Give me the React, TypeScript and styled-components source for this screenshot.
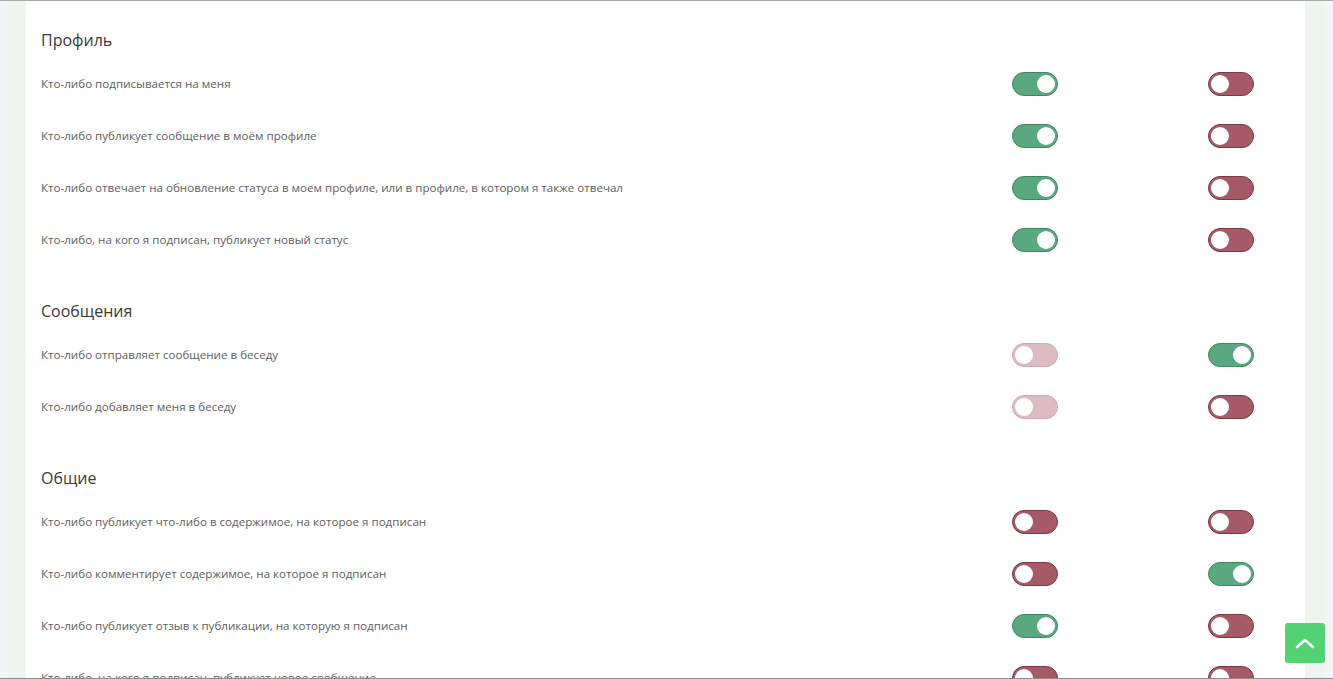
import React from 'react';
import styled, {createGlobalStyle} from "styled-components";

type Toggle = 'on' | 'off' | 'disabled'

type Row = {
    label: string
    site: Toggle
    email: Toggle
}

type Section = {
    title: string
    rows: Row[]
}

const sections: Section[] = [
    {
        title: 'Профиль',
        rows: [
            {label: 'Кто-либо подписывается на меня', site: 'on', email: 'off'},
            {label: 'Кто-либо публикует сообщение в моём профиле', site: 'on', email: 'off'},
            {label: 'Кто-либо отвечает на обновление статуса в моем профиле, или в профиле, в котором я также отвечал', site: 'on', email: 'off'},
            {label: 'Кто-либо, на кого я подписан, публикует новый статус', site: 'on', email: 'off'},
        ]
    },
    {
        title: 'Сообщения',
        rows: [
            {label: 'Кто-либо отправляет сообщение в беседу', site: 'disabled', email: 'on'},
            {label: 'Кто-либо добавляет меня в беседу', site: 'disabled', email: 'off'},
        ]
    },
    {
        title: 'Общие',
        rows: [
            {label: 'Кто-либо публикует что-либо в содержимое, на которое я подписан', site: 'off', email: 'off'},
            {label: 'Кто-либо комментирует содержимое, на которое я подписан', site: 'off', email: 'on'},
            {label: 'Кто-либо публикует отзыв к публикации, на которую я подписан', site: 'on', email: 'off'},
            {label: 'Кто-либо, на кого я подписан, публикует новое сообщение', site: 'off', email: 'off'},
        ]
    },
]

export default function App() {
    return (
        <>
            <GlobalStyle/>
            <Frame>
                <Outer>
                    <Panel>
                        {sections.map((section) => (
                            <SectionBlock key={section.title}>
                                <Title>{section.title}</Title>
                                {section.rows.map((row) => (
                                    <RowLine key={row.label}>
                                        <Label>{row.label}</Label>
                                        <Switch $state={row.site}><Knob/></Switch>
                                        <Switch $state={row.email}><Knob/></Switch>
                                    </RowLine>
                                ))}
                            </SectionBlock>
                        ))}
                    </Panel>
                </Outer>
                <ToTop aria-label="Наверх">
                    <svg width="20" height="12" viewBox="0 0 20 12" fill="none">
                        <polyline points="2,10 10,3 18,10" stroke="#fff" strokeWidth="2.6" strokeLinecap="round"
                                  strokeLinejoin="round"/>
                    </svg>
                </ToTop>
            </Frame>
        </>
    );
};

const GlobalStyle = createGlobalStyle`
    html, body {
        margin: 0;
        padding: 0;
    }
    body {
        font-family: "Open Sans", "Noto Sans", Arial, sans-serif;
        background: #f2f4f8;
    }
`;

const Frame = styled.div`
    height: 100vh;
    box-sizing: border-box;
    border-top: 1px solid #a8a8a8;
    border-bottom: 1px solid #8c8c8c;
    overflow: hidden;
    position: relative;
    padding: 0 8px 0 7px;
`;

const Outer = styled.div`
    background: #eef4ee;
    padding: 0 20px 0 19px;
    height: 100%;
`;

const Panel = styled.div`
    background: #ffffff;
    height: 100%;
    padding: 27px 51px 0 15px;
    box-sizing: border-box;
`;

const SectionBlock = styled.section`
    margin-bottom: 33px;
`;

const Title = styled.h3`
    margin: 0 0 6px;
    font-size: 16px;
    line-height: 24px;
    font-weight: 400;
    color: #3a3a3a;
`;

const RowLine = styled.div`
    display: grid;
    grid-template-columns: 1fr 46px 46px;
    column-gap: 150px;
    align-items: center;
    height: 52px;
`;

const Label = styled.p`
    margin: 0;
    font-size: 11.6px;
    line-height: 18px;
    color: #606060;
`;

const Switch = styled.div<{ $state: Toggle }>`
    width: 46px;
    height: 24px;
    box-sizing: border-box;
    border-radius: 12px;
    padding: 2px;
    display: flex;
    align-items: center;
    justify-content: ${p => p.$state === 'on' ? 'flex-end' : 'flex-start'};
    background: ${p => p.$state === 'on' ? '#5aa880' : p.$state === 'off' ? '#a65a67' : '#dcbcc2'};
    border: 1px solid ${p => p.$state === 'on' ? '#3f875f' : p.$state === 'off' ? '#7b3843' : '#cda9b0'};
`;

const Knob = styled.span`
    width: 18px;
    height: 18px;
    border-radius: 50%;
    background: #ffffff;
`;

const ToTop = styled.button`
    position: absolute;
    right: 8px;
    bottom: 15px;
    width: 40px;
    height: 40px;
    border: none;
    border-radius: 3px;
    background: #52d273;
    display: flex;
    align-items: center;
    justify-content: center;
    padding: 0;
    cursor: pointer;
`;
